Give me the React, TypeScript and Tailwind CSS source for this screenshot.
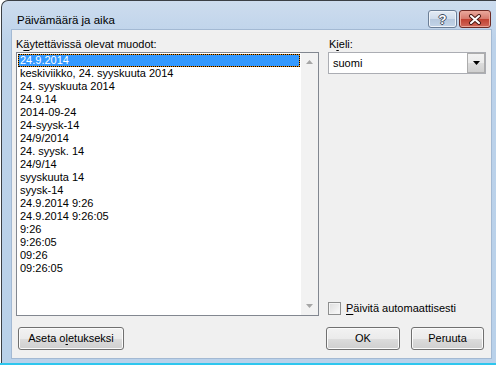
const formats = [
  "24.9.2014",
  "keskiviikko, 24. syyskuuta 2014",
  "24. syyskuuta 2014",
  "24.9.14",
  "2014-09-24",
  "24-syysk-14",
  "24/9/2014",
  "24. syysk. 14",
  "24/9/14",
  "syyskuuta 14",
  "syysk-14",
  "24.9.2014 9:26",
  "24.9.2014 9:26:05",
  "9:26",
  "9:26:05",
  "09:26",
  "09:26:05",
];

const btn =
  "h-[23px] rounded-[3px] border border-[#707070] bg-[linear-gradient(to_bottom,#f2f2f2_0%,#ebebeb_50%,#dddddd_50%,#cfcfcf_100%)] shadow-[inset_0_0_0_1px_#fbfbfb] flex items-center justify-center leading-none";

export default function App() {
  const selected = 0;

  return (
    <div className="w-[496px] h-[365px] bg-white overflow-hidden font-['Liberation_Sans',Arial,sans-serif] text-[11px] text-black">
      <div className="h-[363px] ml-[1px] flex flex-col rounded-tl-[7px] border-l border-t border-[#3b3f45] bg-[linear-gradient(to_bottom,#cddcee_0px,#bcd2ea_40px,#b9d1ea_100%)]">
        {/* title bar */}
        <div className="h-[28px] flex items-start pl-[15px] pr-[5px]">
          <span className="mt-[12px] leading-[15px] text-[11.5px]">Päivämäärä ja aika</span>
          <div className="ml-auto mt-[9px] flex gap-[2px]">
            <div className="w-[29px] h-[18px] rounded-[3px] border border-[#6b7e96] bg-[linear-gradient(to_bottom,#e3ebf5_0%,#cfdcec_50%,#b6c8de_50%,#c3d4e8_100%)] shadow-[inset_0_0_0_1px_#eef3f9] flex items-center justify-center">
              <span className="text-white font-bold text-[13px] leading-none [text-shadow:1px_0_#3f4c5e,-1px_0_#3f4c5e,0_1px_#3f4c5e,0_-1px_#3f4c5e]">?</span>
            </div>
            <div className="w-[32px] h-[18px] rounded-[3px] border border-[#6d2a24] bg-[linear-gradient(to_bottom,#e9a99d_0%,#d6796b_50%,#c0402f_50%,#d0675a_100%)] shadow-[inset_0_0_0_1px_#eba596] flex items-center justify-center">
              <svg width="14" height="11" viewBox="0 0 14 11">
                <path d="M3 2 L11 9 M11 2 L3 9" stroke="#4a1a14" strokeWidth="4" strokeLinecap="round" />
                <path d="M3 2 L11 9 M11 2 L3 9" stroke="#ffffff" strokeWidth="2" strokeLinecap="round" />
              </svg>
            </div>
          </div>
        </div>

        {/* client area */}
        <div className="flex-1 ml-[9px] mr-[4px] mb-[4px] border border-[#a3b9d3] bg-[#f0f0f0] flex flex-col pl-[4px] pr-[4px] pt-[7px] pb-[7px]">
          <div className="flex gap-[9px]">
            <div className="w-[303px] flex flex-col">
              <div className="h-[15px] leading-[15px]">
                K<u className="underline-offset-2">ä</u>ytettävissä olevat muodot:
              </div>
              <div className="h-[264px] border border-[#828790] bg-white flex">
                <div className="flex-1 p-[1px]">
                  {formats.map((f, i) =>
                    i === selected ? (
                      <div key={i} className="h-[13px] bg-[#e8890c] border border-dotted border-black">
                        <div className="h-full bg-[#3399ff] text-white leading-[11px] pl-[1px]">{f}</div>
                      </div>
                    ) : (
                      <div key={i} className="h-[13px] leading-[13px] pl-[2px]">
                        {f}
                      </div>
                    )
                  )}
                </div>
                <div className="w-[17px] bg-[#f2f2f2] flex flex-col items-center justify-between py-[7px]">
                  <svg width="7" height="4" viewBox="0 0 7 4">
                    <path d="M0 4 L3.5 0 L7 4 Z" fill="#a6a6a6" />
                  </svg>
                  <svg width="7" height="4" viewBox="0 0 7 4">
                    <path d="M0 0 L7 0 L3.5 4 Z" fill="#a6a6a6" />
                  </svg>
                </div>
              </div>
            </div>

            <div className="w-[158px] flex flex-col">
              <div className="h-[15px] leading-[15px] pl-[1px]">
                K<u className="underline-offset-2">i</u>eli:
              </div>
              <div className="h-[22px] border border-[#abadb3] bg-white flex items-center">
                <span className="flex-1 pl-[4px] leading-none">suomi</span>
                <div className="w-[18px] h-[20px] border border-[#acacac] bg-[linear-gradient(to_bottom,#f2f2f2_0%,#ebebeb_50%,#dddddd_50%,#cfcfcf_100%)] flex items-center justify-center">
                  <svg width="7" height="4" viewBox="0 0 7 4">
                    <path d="M0 0 L7 0 L3.5 4 Z" fill="#000" />
                  </svg>
                </div>
              </div>
              <div className="mt-auto mb-[1px] flex items-center gap-[5px]">
                <div className="w-[13px] h-[13px] border border-[#8e8f8f] bg-[linear-gradient(135deg,#dcdcdc,#fbfbfb)] shadow-[inset_0_0_0_1px_#f4f4f4]" />
                <span className="leading-[13px]">
                  <u className="underline-offset-2">P</u>äivitä automaattisesti
                </span>
              </div>
            </div>
          </div>

          <div className="mt-[11px] flex items-center">
            <button className={`${btn} ml-[2px] w-[106px]`}>
              Aseta o<u className="underline-offset-2">l</u>etukseksi
            </button>
            <button className={`${btn} ml-auto w-[74px] border-[#3c7fb1] shadow-[inset_0_0_0_1px_#8fdcf8]`}>
              OK
            </button>
            <button className={`${btn} ml-[11px] mr-[3px] w-[73px]`}>Peruuta</button>
          </div>
        </div>
      </div>
      <div className="h-[2px] bg-[#2ec6ee]" />
    </div>
  );
}
